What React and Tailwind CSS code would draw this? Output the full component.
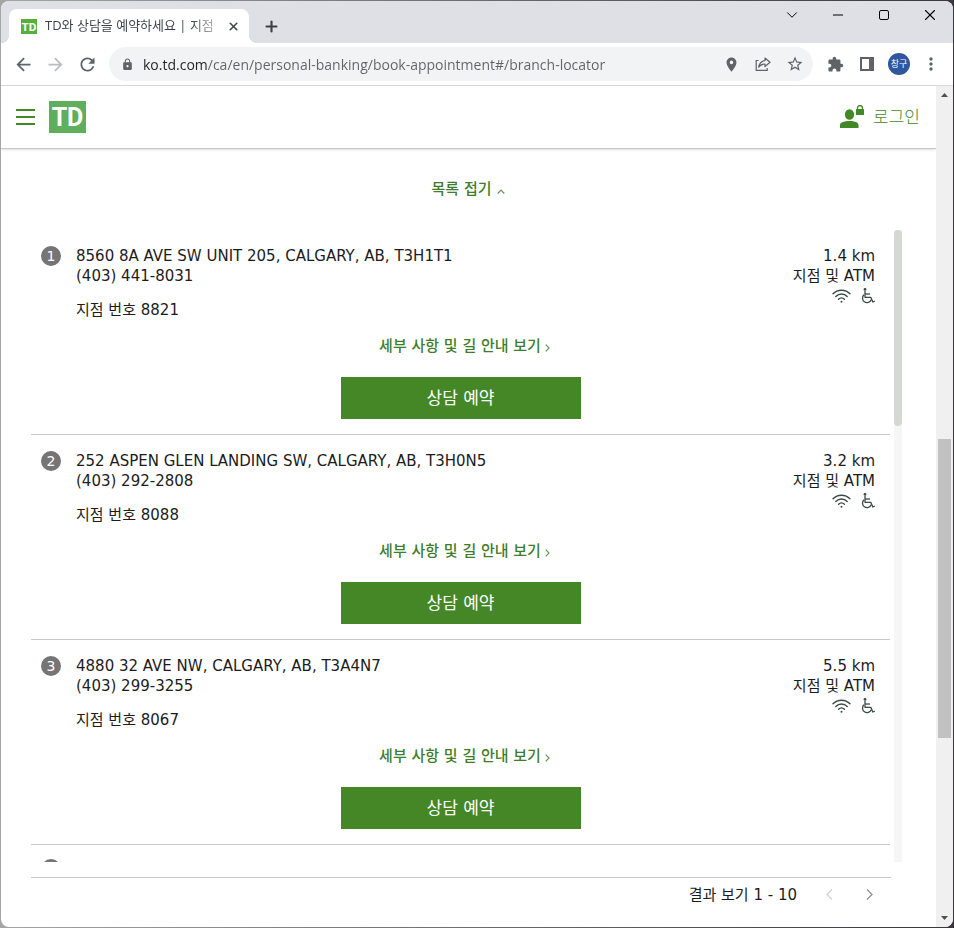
import { useState } from 'react'
import { ChevronDown, Minus, X, Plus } from 'lucide-react'
import {
    MdArrowBack,
    MdArrowForward,
    MdRefresh,
    MdLock,
    MdLocationOn,
    MdStarBorder,
    MdExtension,
    MdMoreVert,
} from 'react-icons/md'

const branches = [
    { id: 1, address: '8560 8A AVE SW UNIT 205, CALGARY, AB, T3H1T1', phone: '(403) 441-8031', number: '8821', distance: '1.4 km' },
    { id: 2, address: '252 ASPEN GLEN LANDING SW, CALGARY, AB, T3H0N5', phone: '(403) 292-2808', number: '8088', distance: '3.2 km' },
    { id: 3, address: '4880 32 AVE NW, CALGARY, AB, T3A4N7', phone: '(403) 299-3255', number: '8067', distance: '5.5 km' },
]

const TdLogo = ({ className, fill }) => (
    <svg viewBox="0 0 37 32" preserveAspectRatio="xMidYMid slice" className={className} aria-hidden="true">
        <rect width="37" height="32" fill={fill} />
        <text x="18.5" y="25" textAnchor="middle" fill="#fff" fontFamily="Roboto, sans-serif" fontWeight="700" fontSize="25">
            TD
        </text>
    </svg>
)

const ShareIcon = () => (
    <svg width="16" height="16" viewBox="0 0 16 16" fill="none" stroke="currentColor" strokeWidth="1.2" aria-hidden="true">
        <path d="M3.5 4.5H1.2v9.8h11V12" />
        <path d="M10 2l5 4.300-5 4.200V8C7 8 5 9 3.700 11.200 4.200 7.500 6.500 5 10 4.600z" strokeLinejoin="round" />
    </svg>
)

const SidePanelIcon = () => (
    <svg width="14" height="14" viewBox="0 0 14 14" aria-hidden="true">
        <path d="M0 0h14v14H0zM2 2v10h7V2z" fill="currentColor" fillRule="evenodd" />
    </svg>
)

const WifiIcon = () => (
    <svg width="19" height="14" viewBox="0 0 19 14" fill="none" stroke="#3b4a45" strokeWidth="1.4" strokeLinecap="round" aria-label="Wi-Fi">
        <path d="M1 4.800C5.500 0 13.500 0 18 4.800" />
        <path d="M3.800 7.600c3.200-3.400 8.200-3.400 11.400 0" />
        <path d="M6.600 10.200c1.700-1.800 4.100-1.800 5.800 0" />
        <circle cx="9.5" cy="12.7" r="1" fill="#3b4a45" stroke="none" />
    </svg>
)

const WheelchairIcon = () => (
    <svg width="14" height="16" viewBox="0 0 14 16" fill="none" stroke="#3b4a45" strokeWidth="1.3" strokeLinejoin="round" aria-label="휠체어">
        <circle cx="4" cy="1.4" r="1.4" fill="#3b4a45" stroke="none" />
        <path d="M4 3v6.300h5.800l2 4.700 2-.8" />
        <path d="M4 6h5" />
        <path d="M3 6.800a4.500 4.500 0 1 0 7.200 5" />
    </svg>
)

const LoginIcon = () => (
    <svg width="24" height="24" viewBox="0 0 24 24" fill="#428827" aria-hidden="true">
        <ellipse cx="9.5" cy="9.5" rx="4.6" ry="5.3" />
        <path d="M0 23v-3c0-2.400 4-4 9.500-4s9 1.600 9 4v3z" />
        <rect x="16" y="4" width="8" height="6" rx=".5" />
        <path d="M17.500 4.500V3a2.500 2.500 0 0 1 5 0v1.500" fill="none" stroke="#428827" strokeWidth="1.3" />
    </svg>
)

const ToolbarButton = ({ label, className = 'text-[#5f6368]', children }) => (
    <button type="button" aria-label={label} className={`flex h-8 w-8 shrink-0 items-center justify-center ${className}`}>
        {children}
    </button>
)

const TabStrip = () => (
    <div className="flex h-[42px] shrink-0 bg-[#dfe0e5] pl-2">
        <div className="relative mt-2 flex w-60 items-center rounded-t-lg bg-white pl-3 pr-2">
            {/* 탭 하단 곡선 */}
            <span className="absolute -left-2 bottom-0 h-2 w-2 bg-[radial-gradient(circle_at_0_0,transparent_8px,white_8px)]" />
            <span className="absolute -right-2 bottom-0 h-2 w-2 bg-[radial-gradient(circle_at_100%_0,transparent_8px,white_8px)]" />
            <TdLogo className="h-[15px] w-4 shrink-0" fill="#54b13c" />
            <span className="ml-2 min-w-0 flex-1 overflow-hidden whitespace-nowrap bg-linear-to-r from-[#3c4043] from-85% to-[#3c4043]/30 bg-clip-text font-['Open_Sans','Noto_Sans_CJK_KR',sans-serif] text-[13px] text-transparent">
                TD와 상담을 예약하세요 | 지점
            </span>
            <button type="button" aria-label="탭 닫기" className="ml-2 flex h-4 w-4 items-center justify-center text-[#45484b]">
                <X size={13} strokeWidth={3} />
            </button>
        </div>
        <button type="button" aria-label="새 탭" className="ml-2 mt-2 flex h-[34px] w-7 items-center justify-center text-[#3c4043]">
            <Plus size={17} strokeWidth={3} />
        </button>
        <div className="ml-auto flex h-7 text-black">
            <button type="button" aria-label="탭 검색" className="flex w-[46px] items-center justify-center">
                <ChevronDown size={18} strokeWidth={1.3} />
            </button>
            <button type="button" aria-label="최소화" className="flex w-[46px] items-center justify-center">
                <Minus size={16} strokeWidth={1.5} />
            </button>
            <button type="button" aria-label="최대화" className="flex w-[46px] items-center justify-center">
                <span className="h-[10px] w-[10px] rounded-[2px] border border-black" />
            </button>
            <button type="button" aria-label="닫기" className="flex w-[46px] items-center justify-center">
                <X size={18} strokeWidth={1.5} />
            </button>
        </div>
    </div>
)

const Toolbar = () => {
    const [url, setUrl] = useState('ko.td.com/ca/en/personal-banking/book-appointment#/branch-locator')

    return (
        <div className="flex h-[43px] shrink-0 items-center border-b border-[#d9dadc] bg-white px-[6px]">
            <ToolbarButton label="뒤로"><MdArrowBack size={21} /></ToolbarButton>
            <ToolbarButton label="앞으로" className="text-[#babcbe]"><MdArrowForward size={21} /></ToolbarButton>
            <ToolbarButton label="새로고침"><MdRefresh size={21} /></ToolbarButton>
            <div className="mx-[6px] flex h-[34px] min-w-0 flex-1 items-center rounded-full bg-[#f1f3f4] pl-3 pr-[2px]">
                <MdLock size={13} className="shrink-0 text-[#5f6368]" />
                {/* 도메인만 진하게 표시 */}
                <input
                    type="text"
                    aria-label="주소창"
                    value={url}
                    onChange={(e) => setUrl(e.target.value)}
                    className="ml-[9px] min-w-0 flex-1 bg-[linear-gradient(90deg,#202124_65px,#5f6368_65px)] bg-clip-text font-['Open_Sans','Noto_Sans_CJK_KR',sans-serif] text-[14px] text-transparent caret-black outline-none"
                />
                <ToolbarButton label="위치"><MdLocationOn size={17} /></ToolbarButton>
                <ToolbarButton label="공유"><ShareIcon /></ToolbarButton>
                <ToolbarButton label="북마크"><MdStarBorder size={18} /></ToolbarButton>
            </div>
            <ToolbarButton label="확장 프로그램"><MdExtension size={17} /></ToolbarButton>
            <ToolbarButton label="사이드 패널"><SidePanelIcon /></ToolbarButton>
            <ToolbarButton label="프로필" className="text-white">
                <span className="flex h-[22px] w-[22px] items-center justify-center rounded-full bg-[#30569b] font-['Noto_Sans_CJK_KR',sans-serif] text-[9px]">
                    창구
                </span>
            </ToolbarButton>
            <ToolbarButton label="메뉴"><MdMoreVert size={20} /></ToolbarButton>
        </div>
    )
}

const SiteHeader = () => (
    <header className="flex h-[63px] shrink-0 items-center border-b border-[#c8c8c8] pl-[15px] pr-4 shadow-sm">
        <button type="button" aria-label="메뉴 열기" className="flex w-[19px] flex-col gap-[5px]">
            <span className="h-[2px] bg-[#428827]" />
            <span className="h-[2px] bg-[#428827]" />
            <span className="h-[2px] bg-[#428827]" />
        </button>
        <a href="#home" aria-label="TD" className="ml-[14px]">
            <TdLogo className="h-8 w-[37px]" fill="#5fae5b" />
        </a>
        <a href="#login" className="ml-auto flex items-center gap-[9px] text-[17px] leading-6 font-light text-[#428827]">
            <LoginIcon />
            로그인
        </a>
    </header>
)

const BranchNumber = ({ id }) => (
    <span className="flex h-5 w-5 shrink-0 items-center justify-center rounded-full bg-[#757575] text-[14px] text-white">
        {id}
    </span>
)

const BranchItem = ({ branch }) => (
    <li className="flex flex-col border-b border-[#c8c8c8] px-[10px] pb-[15px] pt-4">
        <div className="flex pr-[5px]">
            <BranchNumber id={branch.id} />
            <div className="ml-[15px] flex-1">
                <p>{branch.address}</p>
                <p>{branch.phone}</p>
                <p className="mt-[14px]">지점 번호 {branch.number}</p>
            </div>
            <div className="flex flex-col items-end">
                <p>{branch.distance}</p>
                <p>지점 및 ATM</p>
                <div className="mt-[2px] flex items-center gap-[10px]">
                    <WifiIcon />
                    <WheelchairIcon />
                </div>
            </div>
        </div>
        <a href={`#branch-${branch.id}`} className="mt-4 flex items-center justify-center gap-1 pl-2 font-medium text-[#3f7d2a]">
            세부 사항 및 길 안내 보기
            <svg width="5" height="8" viewBox="0 0 5 8" fill="none" stroke="#6b9656" strokeWidth="1.2" className="mt-1" aria-hidden="true">
                <path d="M.7.700L4 4 .700 7.300" />
            </svg>
        </a>
        <button type="button" className="mx-auto mt-[21px] h-[42px] w-60 bg-[#458726] text-[17px] text-white">
            상담 예약
        </button>
    </li>
)

const Pagination = () => (
    <div className="ml-[30px] mr-[45px] mt-[15px] flex h-[50px] shrink-0 items-start justify-end border-t border-[#c8c8c8] pr-3 pt-[7px]">
        <span>결과 보기 1 - 10</span>
        <button type="button" aria-label="이전" disabled className="ml-[22px] flex h-[18px] w-5 items-center justify-center">
            <svg width="7" height="11" viewBox="0 0 7 11" fill="none" stroke="#cfcfcf" strokeWidth="1.2">
                <path d="M6 .500l-5 5 5 5" />
            </svg>
        </button>
        <button type="button" aria-label="다음" className="ml-5 flex h-[18px] w-5 items-center justify-center">
            <svg width="7" height="11" viewBox="0 0 7 11" fill="none" stroke="#8c8c8c" strokeWidth="1.2">
                <path d="M1 .500l5 5-5 5" />
            </svg>
        </button>
    </div>
)

const PageScrollbar = () => (
    <div className="flex w-[17px] shrink-0 flex-col items-center bg-[#f0f0f0]" aria-hidden="true">
        <svg width="17" height="17" viewBox="0 0 17 17" fill="#505050"><path d="M5 11h7L8.500 7z" /></svg>
        <div className="flex-[336]" />
        <div className="w-[13px] flex-[298] bg-[#c1c1c1]" />
        <div className="flex-[172]" />
        <svg width="17" height="17" viewBox="0 0 17 17" fill="#505050"><path d="M5 6h7l-3.500 4z" /></svg>
    </div>
)

const App = () => {
    const [open, setOpen] = useState(true)

    return (
        <div className="h-screen bg-linear-to-r from-[#a5a5a5] to-[#3a3540] p-px">
            <div className="flex h-full flex-col overflow-hidden rounded-lg bg-white">
                <TabStrip />
                <Toolbar />
                <div className="flex min-h-0 flex-1">
                    <main className="flex min-w-0 flex-1 flex-col font-['DejaVu_Sans','Noto_Sans_CJK_KR',sans-serif] text-[15px] leading-5 text-[#1c1c1c]">
                        <SiteHeader />
                        <button
                            type="button"
                            onClick={() => setOpen(!open)}
                            className="mx-auto mt-[30px] flex shrink-0 items-center gap-[6px] font-medium text-[#3f7d2a]"
                        >
                            목록 접기
                            <svg width="8" height="5" viewBox="0 0 8 5" fill="none" stroke="#6b9656" strokeWidth="1.2" className="mt-1" aria-hidden="true">
                                <path d="M.700 4.500L4 1l3.300 3.500" />
                            </svg>
                        </button>
                        <div className="mt-[31px] flex min-h-0 flex-1 pl-[30px] pr-[34px]">
                            {open && (
                                <>
                                    <ul className="min-w-0 flex-1 overflow-hidden">
                                        {branches.map(branch => (
                                            <BranchItem key={branch.id} branch={branch} />
                                        ))}
                                        <li className="px-[10px] pt-[14px]">
                                            <BranchNumber />
                                        </li>
                                    </ul>
                                    <div className="ml-1 w-2 bg-[#f6f6f6]" aria-hidden="true">
                                        <div className="h-[31%] rounded-full bg-[#d6d8d6]" />
                                    </div>
                                </>
                            )}
                        </div>
                        <Pagination />
                    </main>
                    <PageScrollbar />
                </div>
            </div>
        </div>
    )
}

export default App
